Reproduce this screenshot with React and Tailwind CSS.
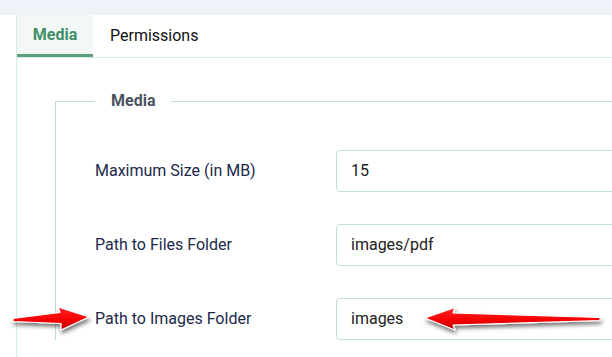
import React from 'react';

const font = { fontFamily: 'Roboto, "Noto Sans", sans-serif' };

const rows = [
  { label: 'Maximum Size (in MB)', value: '15' },
  { label: 'Path to Files Folder', value: 'images/pdf' },
  { label: 'Path to Images Folder', value: 'images' },
];

const Arrows = () => (
  <svg className="absolute inset-0 pointer-events-none" width="612" height="357" viewBox="0 0 612 357">
    <defs>
      <linearGradient id="red" x1="0" y1="0" x2="0" y2="1">
        <stop offset="0" stopColor="#ff2a2a" />
        <stop offset="0.55" stopColor="#f50000" />
        <stop offset="1" stopColor="#b80000" />
      </linearGradient>
      <filter id="shade" x="-20%" y="-60%" width="140%" height="220%">
        <feDropShadow dx="1" dy="3" stdDeviation="2.2" floodColor="#000" floodOpacity="0.55" />
      </filter>
    </defs>
    {/* left arrow -> */}
    <polygon
      points="13,318.5 60,312.5 58,307 89,317 61,330 61,323.5 13,321.5"
      fill="url(#red)"
      stroke="#fff"
      strokeWidth="1.2"
      strokeLinejoin="round"
      filter="url(#shade)"
    />
    {/* right arrow <- */}
    <polygon
      points="425,318 455,307.5 453,313 600,317.5 600,320.5 453,325 455,330"
      fill="url(#red)"
      stroke="#fff"
      strokeWidth="1.2"
      strokeLinejoin="round"
      filter="url(#shade)"
    />
  </svg>
);

export default function App() {
  return (
    <div className="relative w-[612px] h-[357px] overflow-hidden bg-white" style={font}>
      <div className="h-[15px] bg-[#eef2f9]" />
      <div className="ml-[16px] h-[342px] border-l border-[#d3ece1]">
        {/* tabs */}
        <div className="flex h-[43px] border-b border-[#d6ede3]">
          <div className="w-[76px] h-[42px] flex items-center justify-center bg-[#f3f8f6] border-b-[3px] border-[#5d9f7a] text-[16px] font-bold text-[#3f8f69]">
            Media
          </div>
          <div className="px-[17px] h-[42px] flex items-center text-[16px] text-[#111]">Permissions</div>
        </div>

        {/* fieldset */}
        <fieldset className="ml-[38px] mt-[32px] border-t border-l border-[#bce0cd] pl-[39px] pt-[38px]">
          <legend className="px-[16px] text-[16px] leading-[22px] font-bold text-[#4a5261]">Media</legend>
          <div className="flex flex-col gap-[32px]">
            {rows.map((r) => (
              <div key={r.label} className="flex items-center h-[42px]">
                <div className="w-[241px] text-[16px] text-[#1b294b]">{r.label}</div>
                <div className="w-[400px] h-[42px] shrink-0 flex items-center px-[14px] border border-[#bfe3d1] rounded-[4px] text-[16px] text-[#222]">
                  {r.value}
                </div>
              </div>
            ))}
          </div>
        </fieldset>
      </div>
      <Arrows />
    </div>
  );
}
